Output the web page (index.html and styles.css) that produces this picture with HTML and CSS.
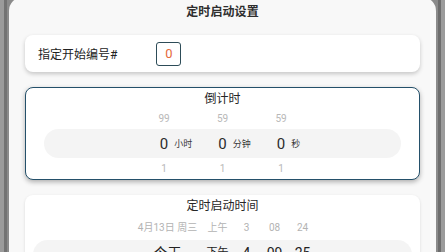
FILE: index.html
```html
<!DOCTYPE html>
<html lang="zh-CN">
<head>
<meta charset="utf-8">
<title>定时启动设置</title>
<link rel="stylesheet" href="styles.css">
</head>
<body>
<div class="screen">
  <div class="dialog">
    <div class="dialog-title">定时启动设置</div>

    <div class="card card-start">
      <span class="label">指定开始编号#</span>
      <span class="num-input">0</span>
    </div>

    <div class="card card-timer">
      <div class="card-title">倒计时</div>
      <div class="pick-row side">
        <div class="cell"><span class="n">99</span></div>
        <div class="cell"><span class="n">59</span></div>
        <div class="cell"><span class="n">59</span></div>
      </div>
      <div class="band">
        <div class="pick-row main">
          <div class="cell"><span class="n">0</span><span class="unit">小时</span></div>
          <div class="cell"><span class="n">0</span><span class="unit">分钟</span></div>
          <div class="cell"><span class="n">0</span><span class="unit">秒</span></div>
        </div>
      </div>
      <div class="pick-row side">
        <div class="cell"><span class="n">1</span></div>
        <div class="cell"><span class="n">1</span></div>
        <div class="cell"><span class="n">1</span></div>
      </div>
    </div>

    <div class="card card-time">
      <div class="card-title">定时启动时间</div>
      <div class="dt-row side">
        <span class="c date">4月13日 周三</span>
        <span class="c ampm">上午</span>
        <span class="c hh">3</span>
        <span class="c mm">08</span>
        <span class="c ss">24</span>
      </div>
      <div class="band band-wide">
        <div class="dt-row main">
          <span class="c date">今天</span>
          <span class="c ampm">下午</span>
          <span class="c hh">4</span>
          <span class="c mm">09</span>
          <span class="c ss">25</span>
        </div>
      </div>
    </div>
  </div>
</div>
</body>
</html>
```

FILE: styles.css
```css
* { box-sizing: border-box; }

html, body {
  margin: 0;
  padding: 0;
  width: 445px;
  height: 252px;
  overflow: hidden;
}

body {
  font-family: Roboto, "Noto Sans CJK SC", "Noto Sans", sans-serif;
  color: #262626;
}

.screen {
  width: 445px;
  height: 252px;
  overflow: hidden;
  padding: 0 9px 0 9px;
  background:
    linear-gradient(to right,
      #9b9b9b 0, #9b9b9b 4px,
      #737373 4px, #737373 7px,
      #8b8b8b 7px, #8b8b8b 438px,
      #6d6d6d 438px, #6d6d6d 441px,
      #9b9b9b 441px);
}

.dialog {
  margin-top: -3px;
  width: 427px;
  height: 270px;
  background: #f8f8f8;
  border-radius: 14px 14px 0 0;
  padding: 5px 16px 0 16px;
}

.dialog-title {
  text-align: center;
  font-size: 12px;
  line-height: 20px;
  font-weight: 700;
  color: #2e2e2e;
  letter-spacing: 0.1px;
}

.card {
  background: #fff;
  border-radius: 8px;
}

.card-start {
  margin-top: 13px;
  height: 37px;
  display: flex;
  align-items: center;
  padding-left: 13px;
  box-shadow: 0 2px 4px rgba(0, 0, 0, 0.2);
}

.label {
  font-size: 12px;
  color: #222;
}

.num-input {
  margin-left: 39px;
  width: 25px;
  height: 24px;
  border: 1px solid #2d4c58;
  border-radius: 3px;
  display: flex;
  align-items: center;
  justify-content: center;
  font-size: 13px;
  color: #e5693a;
}

.card-timer {
  margin-top: 15px;
  height: 93px;
  border: 1px solid #24506a;
  padding-top: 3px;
  box-shadow: 0 2px 5px rgba(0, 0, 0, 0.3);
}

.card-title {
  text-align: center;
  font-size: 12px;
  line-height: 16px;
  color: #262626;
}

.pick-row {
  display: flex;
  justify-content: center;
}

.pick-row.side {
  margin-top: 5px;
  font-size: 10px;
  line-height: 14px;
  color: #b8b8b8;
}

.band + .pick-row.side {
  margin-top: 4px;
}

.cell {
  width: 58.5px;
  display: grid;
  grid-template-columns: 1fr auto 1fr;
  align-items: center;
}

.cell .n {
  grid-column: 2;
}

.cell .unit {
  grid-column: 3;
  padding-left: 6px;
  font-size: 9px;
  color: #3a3a3a;
  white-space: nowrap;
}

.band {
  margin: 3px 18px 0 18px;
  height: 29px;
  background: #f4f4f4;
  border-radius: 15px;
  display: flex;
  align-items: center;
  justify-content: center;
}

.band .pick-row {
  width: 100%;
}

.pick-row.main {
  font-size: 15px;
  line-height: 20px;
  color: #2b2b2b;
}

.card-time {
  margin-top: 15px;
  height: 80px;
  padding-top: 3px;
  box-shadow: 0 1px 3px rgba(0, 0, 0, 0.12);
}

.dt-row {
  display: flex;
  justify-content: center;
  padding-left: 4px;
}

.dt-row.side {
  margin-top: 7px;
  font-size: 10px;
  line-height: 14px;
  color: #b3b3b3;
}

.band-wide {
  margin: 5px 8px 0 8px;
  align-items: flex-start;
  padding-top: 4px;
}

.band-wide .dt-row {
  width: 100%;
}

.dt-row.main {
  font-size: 14px;
  line-height: 18px;
  color: #222;
}

.c {
  text-align: center;
  white-space: nowrap;
}

.c.date { width: 74px; }
.c.ampm { width: 26px; }
.c.hh { width: 32px; }
.c.mm { width: 24px; }
.c.ss { width: 32px; }

.dt-row.main .c.ampm { font-size: 11px; }
```
